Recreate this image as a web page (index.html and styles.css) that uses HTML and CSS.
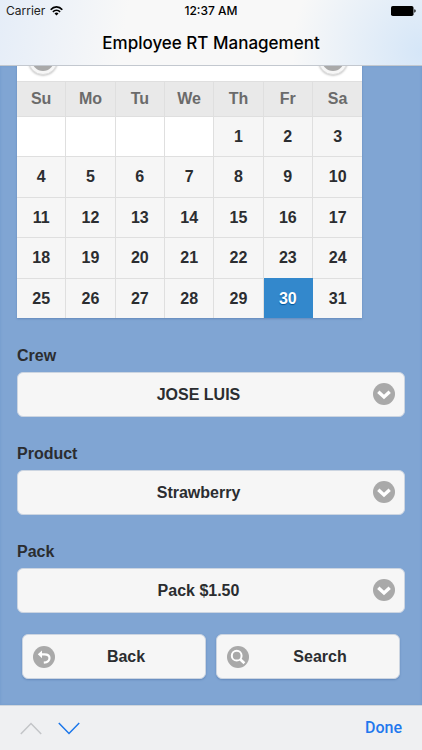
FILE: index.html
```html
<!DOCTYPE html>
<html lang="en">
<head>
<meta charset="utf-8">
<meta name="viewport" content="width=device-width, initial-scale=1">
<title>Employee RT Management</title>
<link rel="stylesheet" href="styles.css">
</head>
<body>
<header class="top">
  <div class="status">
    <div class="carrier">
      <span>Carrier</span>
      <svg width="13" height="10" viewBox="0 0 13 10" fill="none" stroke="#000" stroke-width="1.7"><path d="M.7 3.7C4-.1 9-.1 12.300 3.700"/><path d="M2.900 5.900C5 3.700 8 3.700 10.100 5.900"/><path d="M6.500 9.500 4.500 7.400Q6.500 5.700 8.500 7.400Z" fill="#000" stroke="none"/></svg>
    </div>
    <div class="time">12:37 AM</div>
    <div class="battery">
      <svg width="25" height="10" viewBox="0 0 25 10"><rect width="22.500" height="10" rx="1.800"/><path d="M23.300 3.300q1.400.3 1.400 1.700t-1.400 1.700z"/></svg>
    </div>
  </div>
  <h1>Employee RT Management</h1>
</header>
<main>
  <section class="calendar" aria-label="Date">
    <div class="cal-nav">
      <button type="button" class="round" aria-label="Previous month"><svg width="22" height="22" viewBox="0 0 22 22"><circle cx="11" cy="11" r="11" fill="#a9a9a9"/><path d="M11 5v12M5 11h12" stroke="#fff" stroke-width="2.500"/></svg></button>
      <button type="button" class="round" aria-label="Next month"><svg width="22" height="22" viewBox="0 0 22 22"><circle cx="11" cy="11" r="11" fill="#a9a9a9"/><path d="M11 5v12M5 11h12" stroke="#fff" stroke-width="2.500"/></svg></button>
    </div>
    <table>
      <thead><tr><th>Su</th><th>Mo</th><th>Tu</th><th>We</th><th>Th</th><th>Fr</th><th>Sa</th></tr></thead>
      <tbody>
        <tr><td class="empty"></td><td class="empty"></td><td class="empty"></td><td class="empty"></td><td>1</td><td>2</td><td>3</td></tr>
        <tr><td>4</td><td>5</td><td>6</td><td>7</td><td>8</td><td>9</td><td>10</td></tr>
        <tr><td>11</td><td>12</td><td>13</td><td>14</td><td>15</td><td>16</td><td>17</td></tr>
        <tr><td>18</td><td>19</td><td>20</td><td>21</td><td>22</td><td>23</td><td>24</td></tr>
        <tr><td>25</td><td>26</td><td>27</td><td>28</td><td>29</td><td class="selected">30</td><td>31</td></tr>
      </tbody>
    </table>
  </section>
  <form>
    <div class="field">
      <label for="crew">Crew</label>
      <div class="select">
        <select id="crew"><option>JOSE LUIS</option></select>
        <svg class="caret" width="22" height="22" viewBox="0 0 22 22"><circle cx="11" cy="11" r="11"/><path d="m5.300 8.800 5.700 5.200 5.700-5.200"/></svg>
      </div>
    </div>
    <div class="field">
      <label for="product">Product</label>
      <div class="select">
        <select id="product"><option>Strawberry</option></select>
        <svg class="caret" width="22" height="22" viewBox="0 0 22 22"><circle cx="11" cy="11" r="11"/><path d="m5.300 8.800 5.700 5.200 5.700-5.200"/></svg>
      </div>
    </div>
    <div class="field">
      <label for="pack">Pack</label>
      <div class="select">
        <select id="pack"><option>Pack $1.50</option></select>
        <svg class="caret" width="22" height="22" viewBox="0 0 22 22"><circle cx="11" cy="11" r="11"/><path d="m5.300 8.800 5.700 5.200 5.700-5.200"/></svg>
      </div>
    </div>
    <div class="actions">
      <button type="button" class="action">
        <svg width="22" height="22" viewBox="0 0 22 22"><circle cx="11" cy="11" r="11" fill="#a9a9a9"/><path d="M8 8.300h3.500c3 0 5 1.500 5 3.800s-2 4.300-5.700 4.600" fill="none" stroke="#fff" stroke-width="2.200"/><path d="M4.800 8.200 9 4.400v7.800z" fill="#fff"/></svg>
        <span>Back</span>
      </button>
      <button type="button" class="action">
        <svg width="22" height="22" viewBox="0 0 22 22"><circle cx="11" cy="11" r="11" fill="#a9a9a9"/><g fill="none" stroke="#fff"><circle cx="9.700" cy="9.700" r="4.900" stroke-width="2"/><path d="m13.200 13.200 4.200 4" stroke-width="2.600"/></g></svg>
        <span>Search</span>
      </button>
    </div>
  </form>
</main>
<footer class="accessory">
  <button type="button" aria-label="Previous field" disabled><svg width="22" height="13" viewBox="0 0 22 13"><path d="m.8 12 10.200-10.500L21.200 12" stroke="#c3c5c8"/></svg></button>
  <button type="button" aria-label="Next field"><svg width="22" height="13" viewBox="0 0 22 13"><path d="m.8 1 10.200 10.500L21.200 1" stroke="#1b76ea"/></svg></button>
  <button type="button" class="done">Done</button>
</footer>
</body>
</html>
```
FILE: styles.css
```css
* { box-sizing: border-box; }

body {
  margin: 0;
  min-height: 100vh;
  display: flex;
  flex-direction: column;
  background: #80a5d3;
  color: #2b2d30;
  font: bold 16px/20px "Liberation Sans", Arial, sans-serif;
}

button, select {
  margin: 0;
  font: inherit;
  color: inherit;
}

.top {
  border-bottom: 1px solid #c3c8cf;
  background:
    radial-gradient(circle 130px at 100% 80%, #d5e6f8, #d5e6f800),
    linear-gradient(100deg, #e5edf8 0, #f8f8f8 30%);
  color: #000;
  font-family: Inter, "Liberation Sans", sans-serif;
}

.status {
  display: grid;
  grid-template-columns: 1fr auto 1fr;
  align-items: center;
  height: 22px;
  padding: 0 6px;
  font-size: 12px;
  font-weight: 500;
}

.carrier {
  display: flex;
  align-items: center;
  gap: 5px;
  color: #222;
  font-weight: 400;
}

.battery {
  display: flex;
  justify-content: flex-end;
}

h1 {
  margin: 0;
  padding: 10px 0 11px;
  font-size: 17px;
  font-weight: 500;
  line-height: 22px;
  text-align: center;
}

main {
  flex: 1;
  overflow: hidden;
  padding: 0 17px 25px;
  box-shadow: inset 1px 0 2px #789fcf, inset -1px 0 2px #789fcf;
}

.calendar {
  width: 89%;
  margin-top: -24px;
  background: #fff;
  box-shadow: 0 1px 2px #6389bb;
}

.cal-nav {
  display: flex;
  justify-content: space-between;
  height: 39px;
  padding: 3px 14px 0 11px;
}

.round {
  display: flex;
  align-items: center;
  justify-content: center;
  width: 30px;
  height: 30px;
  padding: 0;
  border: 1px solid #ddd;
  border-radius: 50%;
  background: #f6f6f6;
  box-shadow: 0 1px 2px #ccc;
}

table {
  width: 100%;
  table-layout: fixed;
  border-spacing: 0;
}

th, td {
  padding: 0;
  border: 0 solid #dfdfdf;
  border-width: 1px 1px 0 0;
  text-align: center;
}

th:last-child, td:last-child { border-right: 0; }

th {
  height: 35px;
  background: #e9e9e9;
  color: #6b6b6b;
}

td {
  height: 40px;
  background: #f6f6f6;
}

tbody tr:nth-child(2n) td { height: 41px; }

.empty { background: #fff; }

.selected {
  border-color: #3388cc;
  background: #3388cc;
  color: #fff;
  text-shadow: 0 1px 1px #005599;
}

form { padding-top: 28px; }

.field { margin-bottom: 27px; }

label {
  display: block;
  margin-bottom: 6px;
}

.select { position: relative; }

select {
  display: block;
  width: 100%;
  height: 45px;
  padding: 0 40px 0 15px;
  border: 1px solid #ccd5e1;
  border-radius: 6px;
  background: #f6f6f6;
  appearance: none;
  text-align: center;
  text-align-last: center;
}

.caret {
  position: absolute;
  top: 11px;
  right: 10px;
  fill: #a9a9a9;
  pointer-events: none;
}

.caret path {
  fill: none;
  stroke: #fff;
  stroke-width: 3.4px;
}

.actions {
  display: grid;
  grid-template-columns: 1fr 1fr;
  gap: 10px;
  margin: -6px 5px 0;
}

.action {
  display: flex;
  align-items: center;
  height: 45px;
  padding: 0 10px;
  border: 1px solid #ccd5e1;
  border-radius: 6px;
  background: #f6f6f6;
  box-shadow: 0 1px 2px #6389bb;
}

.action span {
  flex: 1;
  padding-left: 2px;
}

.accessory {
  display: flex;
  align-items: center;
  gap: 16px;
  height: 45px;
  padding: 0 20px;
  border-top: 1px solid #d0d6dd;
  background: #eff0f2;
}

.accessory button {
  display: flex;
  padding: 0;
  border: 0;
  background: none;
}

.accessory path {
  fill: none;
  stroke-width: 1.5px;
}

.accessory .done {
  margin-left: auto;
  color: #1f78ee;
  font-family: Roboto, "Liberation Sans", sans-serif;
  font-weight: 500;
}
```
